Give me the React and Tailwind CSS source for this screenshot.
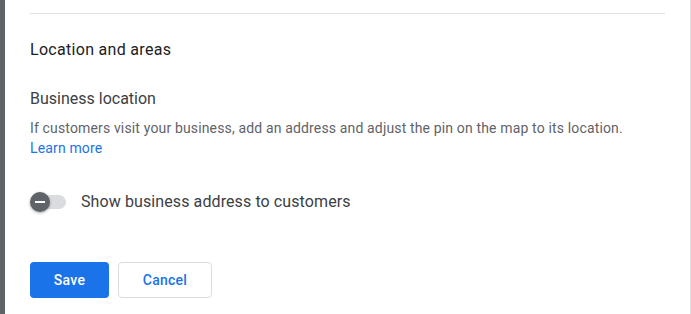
import React from 'react';

const App = () => {
  return (
    <div className="flex w-[691px] h-[314px] overflow-hidden bg-white font-['Roboto',sans-serif]">
      {/* backdrop edge */}
      <div className="w-[5px] shrink-0 bg-[#5f6368]" />

      {/* panel */}
      <div className="flex-1 border-r border-[#e0e0e0] px-[25px]">
        <div className="mt-[13px] border-t border-[#e0e0e0]" />

        <h2 className="mt-[25px] text-[16px] leading-[22px] font-normal tracking-[0.3px] text-[#202124]">
          Location and areas
        </h2>

        <h3 className="mt-[27px] text-[16px] leading-[22px] text-[#3c4043]">Business location</h3>

        <p className="mt-[8px] text-[14px] leading-[20px] tracking-[0.15px] text-[#5f6368]">
          If customers visit your business, add an address and adjust the pin on the map to its location.
          <br />
          <a href="#" className="text-[#1a73e8]">Learn more</a>
        </p>

        <div className="mt-[34px] flex items-center gap-[15px]">
          {/* toggle */}
          <div className="relative w-[36px] h-[20px] flex items-center">
            <div className="ml-[4px] w-[32px] h-[14px] rounded-full bg-[#dadce0]" />
            <div className="absolute left-0 top-0 w-[20px] h-[20px] rounded-full bg-[#5f6368] shadow-[0_1px_3px_rgba(0,0,0,0.35)] flex items-center justify-center">
              <div className="w-[10px] h-[2px] bg-white" />
            </div>
          </div>
          <span className="text-[16px] leading-[20px] tracking-[0.1px] text-[#3c4043]">Show business address to customers</span>
        </div>

        <div className="mt-[50px] flex gap-[9px]">
          <button className="w-[79px] h-[36px] rounded-[4px] bg-[#1a73e8] text-white text-[14px] font-medium tracking-[0.25px]">
            Save
          </button>
          <button className="w-[94px] h-[36px] rounded-[4px] border border-[#dadce0] bg-white text-[#1a73e8] text-[14px] font-medium tracking-[0.25px]">
            Cancel
          </button>
        </div>
      </div>
    </div>
  );
};

export default App;
